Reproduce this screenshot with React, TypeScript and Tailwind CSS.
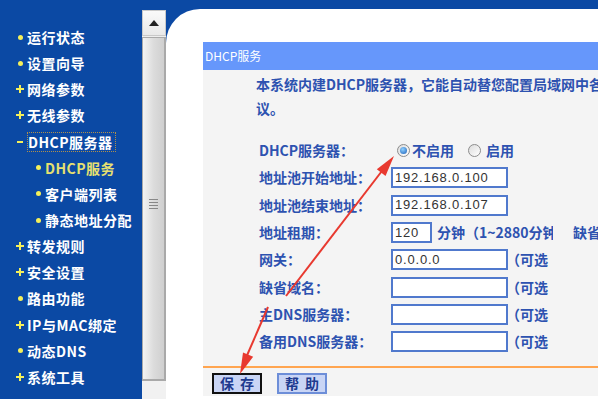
import React from "react"

const cn = "font-['Noto_Sans_CJK_SC','Noto_Sans',sans-serif]"

type Item = { label: string; mark: "dot" | "plus" | "minus"; sub?: boolean; active?: boolean; focus?: boolean }

const menu: Item[] = [
	{ label: "运行状态", mark: "dot" },
	{ label: "设置向导", mark: "dot" },
	{ label: "网络参数", mark: "plus" },
	{ label: "无线参数", mark: "plus" },
	{ label: "DHCP服务器", mark: "minus", focus: true },
	{ label: "DHCP服务", mark: "dot", sub: true, active: true },
	{ label: "客户端列表", mark: "dot", sub: true },
	{ label: "静态地址分配", mark: "dot", sub: true },
	{ label: "转发规则", mark: "plus" },
	{ label: "安全设置", mark: "plus" },
	{ label: "路由功能", mark: "dot" },
	{ label: "IP与MAC绑定", mark: "plus" },
	{ label: "动态DNS", mark: "dot" },
	{ label: "系统工具", mark: "plus" },
]

const Mark = ({ mark }: { mark: Item["mark"] }) => {
	if (mark === "dot") return <span className="w-[5px] h-[5px] rounded-full bg-[#f4f05a]" />
	if (mark === "minus") return <span className="w-[6px] h-[2px] bg-[#f4f05a]" />
	return (
		<span className="relative w-[8px] h-[8px]">
			<span className="absolute left-0 top-[3px] w-[8px] h-[2px] bg-[#f4f05a]" />
			<span className="absolute left-[3px] top-0 w-[2px] h-[8px] bg-[#f4f05a]" />
		</span>
	)
}

const Sidebar = () => (
	<div className={`w-[142px] shrink-0 pt-[24px] ${cn}`}>
		{menu.map((m) => (
			<div key={m.label} className={`h-[26.15px] flex items-center ${m.sub ? "pl-[31px]" : "pl-[13px]"}`}>
				<span className="w-[14px] flex items-center justify-center">
					<Mark mark={m.mark} />
				</span>
				<span
					className={`text-[14px] leading-[18px] font-bold tracking-[0.5px] ${m.active ? "text-[#e6e070]" : "text-white"} ${m.focus ? "border border-dotted border-[#b0904a] pr-[2px]" : ""}`}
				>
					{m.label}
				</span>
			</div>
		))}
	</div>
)

const Scrollbar = () => (
	<div className="w-[24px] shrink-0 mt-[10px] bg-[#eeeeee] flex flex-col">
		<div className="h-[26px] border border-[#c9c9c9] bg-gradient-to-b from-[#fafafa] to-[#e9e9e9] flex items-center justify-center">
			<svg width="10" height="6" viewBox="0 0 10 6">
				<path d="M0 6 L5 0 L10 6 Z" fill="#222" />
			</svg>
		</div>
		<div className="mt-[1px] h-[344px] border border-[#a9a9a9] border-r-2 border-b-2 bg-gradient-to-r from-[#f3f3f3] via-[#dcdcdc] to-[#cfcfcf] flex items-center justify-center">
			<div className="flex flex-col gap-[2px] mt-[-10px]">
				<span className="w-[9px] h-[1px] bg-[#888]" />
				<span className="w-[9px] h-[1px] bg-[#888]" />
				<span className="w-[9px] h-[1px] bg-[#888]" />
				<span className="w-[9px] h-[1px] bg-[#888]" />
			</div>
		</div>
		<div className="flex-1 bg-[#f1f1f1]" />
	</div>
)

const Radio = ({ on }: { on?: boolean }) => (
	<span className="w-[13px] h-[13px] rounded-full border border-[#8c8c8c] bg-gradient-to-br from-[#dcdcdc] to-white flex items-center justify-center">
		{on && <span className="w-[7px] h-[7px] rounded-full bg-[radial-gradient(circle_at_40%_35%,#8fd0ff,#1a5fb8)]" />}
	</span>
)

const Field = ({ value, w = "w-[117px]" }: { value?: string; w?: string }) => (
	<div className={`${w} h-[21px] border-2 border-[#5079cd] bg-white flex items-center pl-[2px] font-['Liberation_Sans',sans-serif] text-[13px] text-[#333] tracking-[0.8px] shrink-0`}>
		{value}
	</div>
)

const Optional = () => <span className="ml-[-2px] text-[14px] font-bold text-[#2d52b0]">（可选</span>

const rows: { label: string; node: React.ReactNode }[] = [
	{
		label: "DHCP服务器：",
		node: (
			<div className="flex items-center pl-[6px]">
				<Radio on />
				<span className="ml-[2px] text-[14px] font-bold text-[#2d52b0]">不启用</span>
				<span className="ml-[14px]"><Radio /></span>
				<span className="ml-[5px] text-[14px] font-bold text-[#2d52b0]">启用</span>
			</div>
		),
	},
	{ label: "地址池开始地址：", node: <Field value="192.168.0.100" /> },
	{ label: "地址池结束地址：", node: <Field value="192.168.0.107" /> },
	{
		label: "地址租期：",
		node: (
			<div className="flex items-center">
				<Field value="120" w="w-[41px]" />
				<span className="ml-[5px] w-[116px] overflow-hidden whitespace-nowrap text-[14px] font-bold text-[#2d52b0]">分钟（1~2880分钟，缺省为120分钟）</span>
				<span className="ml-[20px] whitespace-nowrap text-[14px] font-bold text-[#2d52b0]">缺省为120分钟</span>
			</div>
		),
	},
	{ label: "网关：", node: <div className="flex items-center"><Field value="0.0.0.0" /><Optional /></div> },
	{ label: "缺省域名：", node: <div className="flex items-center"><Field /><Optional /></div> },
	{ label: "主DNS服务器：", node: <div className="flex items-center"><Field /><Optional /></div> },
	{ label: "备用DNS服务器：", node: <div className="flex items-center"><Field /><Optional /></div> },
]

const Panel = () => (
	<div className={`w-[460px] ${cn}`}>
		<div className="h-[28px] bg-[#6697fb] flex items-center pl-[2px] text-white text-[12px]">DHCP服务</div>
		<div className="bg-[#f4f4f4]">
			<p className="pl-[53px] pt-[2px] text-[14px] leading-[24px] font-bold text-[#2d52b0] whitespace-nowrap">
				本系统内建DHCP服务器，它能自动替您配置局域网中各计算机的TCP/IP协
				<br />
				议。
			</p>
			<div className="pt-[17px] pl-[56px] pb-[11px]">
				{rows.map((r) => (
					<div key={r.label} className="h-[27.3px] flex items-center">
						<span className="w-[132px] shrink-0 text-[14px] font-bold text-[#2d52b0] whitespace-nowrap">{r.label}</span>
						{r.node}
					</div>
				))}
			</div>
			<div className="h-[2px] bg-[#ffa550]" />
			<div className="h-[28px] flex items-start gap-[15px] pl-[9px] pt-[5px]">
				<button className="w-[50px] h-[21px] border-2 border-[#111] bg-[#c9d5f5] text-[14px] leading-[17px] font-bold text-[#1e3b8f] tracking-[6px] pl-[6px]">保存</button>
				<button className="w-[50px] h-[21px] border-2 border-[#6d8ed8] bg-[#c9d5f5] text-[14px] leading-[17px] font-bold text-[#1e3b8f] tracking-[6px] pl-[6px]">帮助</button>
			</div>
		</div>
	</div>
)

const head = (x1: number, y1: number, x2: number, y2: number) => {
	const dx = x2 - x1
	const dy = y2 - y1
	const l = Math.hypot(dx, dy)
	const ux = dx / l
	const uy = dy / l
	const bx = x2 - ux * 21
	const by = y2 - uy * 21
	return `${x2},${y2} ${bx - uy * 5.5},${by + ux * 5.5} ${bx + uy * 5.5},${by - ux * 5.5}`
}

const Arrows = () => (
	<svg className="absolute inset-0 pointer-events-none" width="598" height="399">
		<line x1="286" y1="296" x2="385" y2="167" stroke="#e8392f" strokeWidth="2" />
		<polygon points={head(286, 296, 394, 156)} fill="#e8392f" />
		<line x1="268" y1="307" x2="245" y2="360" stroke="#e8392f" strokeWidth="2" />
		<polygon points={head(268, 307, 240, 374)} fill="#e8392f" />
	</svg>
)

export default function App() {
	return (
		<div className="relative w-[598px] h-[399px] overflow-hidden bg-[#0b49a4] flex">
			<Sidebar />
			<Scrollbar />
			<div className="flex-1 mt-[9px] bg-white rounded-tl-[34px] pl-[37px] pt-[33px] overflow-hidden">
				<Panel />
			</div>
			<Arrows />
		</div>
	)
}
